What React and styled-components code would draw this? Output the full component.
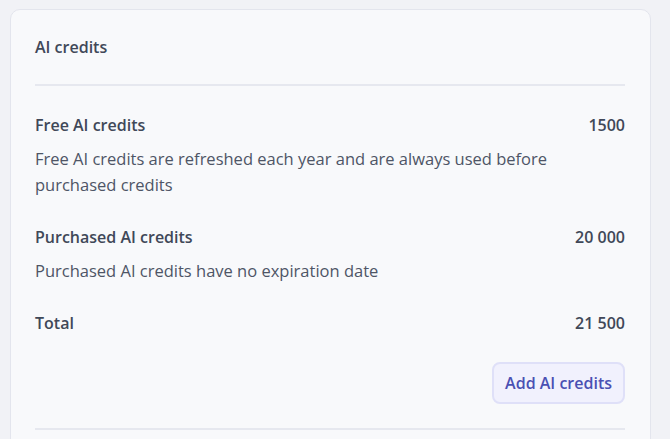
import React from 'react';
import styled, { createGlobalStyle } from 'styled-components';

const GlobalStyle = createGlobalStyle`
    html, body {
        margin: 0;
        padding: 0;
        background: #f1f2f6;
        font-family: 'Open Sans', 'Liberation Sans', sans-serif;
    }
`;

const credits = [
    {
        title: 'Free AI credits',
        amount: '1500',
        note: 'Free AI credits are refreshed each year and are always used before purchased credits',
    },
    {
        title: 'Purchased AI credits',
        amount: '20 000',
        note: 'Purchased AI credits have no expiration date',
    },
];

const App = () => {
    return (
        <>
            <GlobalStyle />
            <StPage>
                <StCard>
                    <StHeader>AI credits</StHeader>
                    <StBody>
                        {credits.map((item) => (
                            <StSection key={item.title}>
                                <StRow>
                                    <StLabel>{item.title}</StLabel>
                                    <StLabel>{item.amount}</StLabel>
                                </StRow>
                                <StNote>{item.note}</StNote>
                            </StSection>
                        ))}
                        <StRow>
                            <StLabel>Total</StLabel>
                            <StLabel>21 500</StLabel>
                        </StRow>
                        <StActions>
                            <StButton>Add AI credits</StButton>
                        </StActions>
                    </StBody>
                </StCard>
            </StPage>
        </>
    );
};

export default App;

const StPage = styled.div`
    padding: 9px 19px 0 10px;
    height: 439px;
    box-sizing: border-box;
    overflow: hidden;
`;

const StCard = styled.div`
    background: #f8f9fb;
    border: 1px solid #e3e5ed;
    border-radius: 10px;
    padding: 25px 25px 0 24px;
    min-height: 500px;
`;

const StHeader = styled.h2`
    margin: 0;
    padding-bottom: 25px;
    border-bottom: 2px solid #e6e8ef;
    font-size: 16px;
    line-height: 24px;
    font-weight: 600;
    color: #404858;
`;

const StBody = styled.div`
    display: flex;
    flex-direction: column;
    gap: 27px;
    padding-top: 27px;
    padding-bottom: 24px;
    border-bottom: 2px solid #e6e8ef;
`;

const StSection = styled.div`
    display: flex;
    flex-direction: column;
    gap: 9px;
`;

const StRow = styled.div`
    display: flex;
    justify-content: space-between;
    align-items: center;
`;

const StLabel = styled.span`
    font-size: 16px;
    line-height: 24px;
    font-weight: 600;
    color: #404858;
`;

const StNote = styled.p`
    margin: 0;
    font-size: 16.5px;
    line-height: 26px;
    color: #4e5566;
    padding-right: 60px;
`;

const StActions = styled.div`
    display: flex;
    justify-content: flex-end;
`;

const StButton = styled.button`
    height: 42px;
    padding: 0 11px;
    border: 2px solid #dfe0f8;
    border-radius: 8px;
    background: #f1f1fd;
    color: #4a50b3;
    font-family: inherit;
    font-size: 16px;
    font-weight: 600;
    cursor: pointer;
`;
